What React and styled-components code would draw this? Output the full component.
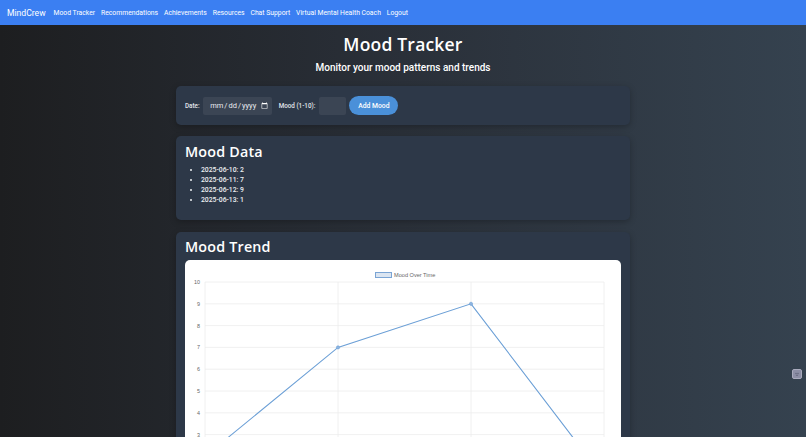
import React from "react";
import styled, { createGlobalStyle } from "styled-components";

const GlobalStyle = createGlobalStyle`
  * { box-sizing: border-box; }
  body {
    margin: 0;
    font-family: Roboto, "Liberation Sans", sans-serif;
    background: linear-gradient(to right, #1d1e20 0%, #2a3039 50%, #35424f 100%);
    color: #ffffff;
    min-height: 100vh;
  }
`;

const Page = styled.div`
  min-height: 100vh;
`;

const Navbar = styled.nav`
  display: flex;
  align-items: center;
  height: 25px;
  padding: 0 7px;
  background-color: #3b7ff2;
  gap: 5.9px;
`;

const Brand = styled.span`
  font-size: 8.6px;
  color: #ffffff;
  margin-right: 2px;
`;

const NavLink = styled.a`
  font-size: 6.8px;
  color: #ffffff;
  text-decoration: none;
`;

const Main = styled.main`
  width: 454px;
  margin: 0 auto;
  padding-top: 8px;
  display: flex;
  flex-direction: column;
`;

const Title = styled.h1`
  margin: 0;
  text-align: center;
  font-family: "Open Sans", sans-serif;
  font-weight: 600;
  font-size: 17.5px;
  line-height: 22px;
  letter-spacing: 0.2px;
`;

const Subtitle = styled.p`
  margin: 7px 0 0;
  text-align: center;
  font-size: 10px;
  font-weight: 500;
  line-height: 12px;
`;

const Card = styled.section`
  background-color: #2d3848;
  border-radius: 5px;
  box-shadow: 0 2px 6px rgba(0, 0, 0, 0.25);
  padding: ${({ pad }) => pad || "9px"};
  margin-top: ${({ top }) => top || "11px"};
`;

const Form = styled.form`
  display: flex;
  align-items: center;
  gap: 3.5px;
  height: 21px;
`;

const Label = styled.label`
  font-size: 6.3px;
  font-weight: 500;
  color: #e2e6ec;
  margin-left: ${({ gap }) => gap || "0"};
`;

const Field = styled.input`
  height: 18px;
  width: ${({ w }) => w};
  background-color: #3b4554;
  border: none;
  border-radius: 2px;
  color: #e8ebef;
  font-family: Roboto, sans-serif;
  font-size: 7.5px;
  padding: 0 4px 0 6px;
  color-scheme: dark;
  outline: none;

  &::-webkit-calendar-picker-indicator {
    width: 7px;
    height: 7px;
    margin-left: 2px;
    padding: 0;
  }
`;

const Button = styled.button`
  height: 19px;
  width: 49px;
  border: none;
  border-radius: 10px;
  background-color: #4a90d9;
  color: #ffffff;
  font-family: Roboto, sans-serif;
  font-size: 6.8px;
  font-weight: 500;
  padding: 0;
`;

const SectionTitle = styled.h2`
  margin: 0;
  font-family: "Open Sans", sans-serif;
  font-weight: 600;
  font-size: 14.3px;
  line-height: 18px;
  letter-spacing: 0.2px;
`;

const List = styled.ul`
  margin: 4px 0 0;
  padding-left: 16px;
  font-size: 6.8px;
  font-weight: 500;
  line-height: 10px;
  color: #eef0f3;
`;

const ChartBox = styled.div`
  margin-top: 4px;
  background-color: #ffffff;
  border-radius: 5px;
  height: 260px;
  overflow: hidden;
`;

const Widget = styled.div`
  position: fixed;
  right: 4px;
  top: 369px;
  width: 10px;
  height: 10px;
  border-radius: 2px;
  background-color: #8d8fa6;
  border: 1px solid #a9abbd;
  display: flex;
  align-items: center;
  justify-content: center;
`;

const moods = [
  { date: "2025-06-10", value: 2 },
  { date: "2025-06-11", value: 7 },
  { date: "2025-06-12", value: 9 },
  { date: "2025-06-13", value: 1 },
];

const links = [
  "Mood Tracker",
  "Recommendations",
  "Achievements",
  "Resources",
  "Chat Support",
  "Virtual Mental Health Coach",
  "Logout",
];

// chart geometry, in px inside the white box
const plotLeft = 20;
const plotRight = 419;
const yFor = (v) => 22 + (10 - v) * 21.8;

const MoodChart = () => {
  const step = (plotRight - plotLeft) / (moods.length - 1);
  const points = moods.map((m, i) => [plotLeft + i * step, yFor(m.value)]);
  const ticks = [10, 9, 8, 7, 6, 5, 4, 3, 2, 1, 0];
  return (
    <svg width="436" height="260" viewBox="0 0 436 260">
      <rect x="190.5" y="12.5" width="16" height="5" fill="#dbe5f1" stroke="#7aa4d4" strokeWidth="1" />
      <text x="209" y="17" fontSize="5.6" fill="#666" fontFamily="Liberation Sans, sans-serif">
        Mood Over Time
      </text>
      {ticks.map((t) => (
        <g key={t}>
          <line x1={plotLeft} x2={plotRight} y1={yFor(t)} y2={yFor(t)} stroke="#ececec" strokeWidth="0.8" />
          <text
            x="15"
            y={yFor(t) + 2}
            fontSize="5.4"
            fill="#666"
            textAnchor="end"
            fontFamily="Liberation Sans, sans-serif"
          >
            {t}
          </text>
        </g>
      ))}
      {points.map(([x], i) => (
        <line key={i} x1={x} x2={x} y1={yFor(10)} y2="260" stroke="#ececec" strokeWidth="0.8" />
      ))}
      <polyline
        points={points.map((p) => p.join(",")).join(" ")}
        fill="none"
        stroke="#6b9fd6"
        strokeWidth="1.1"
      />
      {points.map(([x, y], i) => (
        <circle key={i} cx={x} cy={y} r="1.6" fill="#8fb5e0" stroke="#6b9fd6" strokeWidth="0.6" />
      ))}
    </svg>
  );
};

const App = () => {
  return (
    <Page>
      <GlobalStyle />
      <Navbar>
        <Brand>MindCrew</Brand>
        {links.map((l) => (
          <NavLink key={l} href="#">
            {l}
          </NavLink>
        ))}
      </Navbar>
      <Main>
        <Title>Mood Tracker</Title>
        <Subtitle>Monitor your mood patterns and trends</Subtitle>
        <Card top="12px">
          <Form onSubmit={(e) => e.preventDefault()}>
            <Label>Date:</Label>
            <Field type="date" w="69px" />
            <Label gap="3px">Mood (1-10):</Label>
            <Field type="number" w="27px" />
            <Button type="submit">Add Mood</Button>
          </Form>
        </Card>
        <Card pad="7px 9px 15px">
          <SectionTitle>Mood Data</SectionTitle>
          <List>
            {moods.map((m) => (
              <li key={m.date}>
                {m.date}: {m.value}
              </li>
            ))}
          </List>
        </Card>
        <Card top="12px" pad="6px 9px 0">
          <SectionTitle>Mood Trend</SectionTitle>
          <ChartBox>
            <MoodChart />
          </ChartBox>
        </Card>
      </Main>
      <Widget>
        <svg width="6" height="6" viewBox="0 0 6 6">
          <circle cx="2" cy="2.2" r="0.5" fill="#3b3d52" />
          <circle cx="4" cy="2.2" r="0.5" fill="#3b3d52" />
          <path d="M1.8 4 Q3 4.8 4.2 4" stroke="#3b3d52" strokeWidth="0.5" fill="none" />
        </svg>
      </Widget>
    </Page>
  );
};

export default App;
